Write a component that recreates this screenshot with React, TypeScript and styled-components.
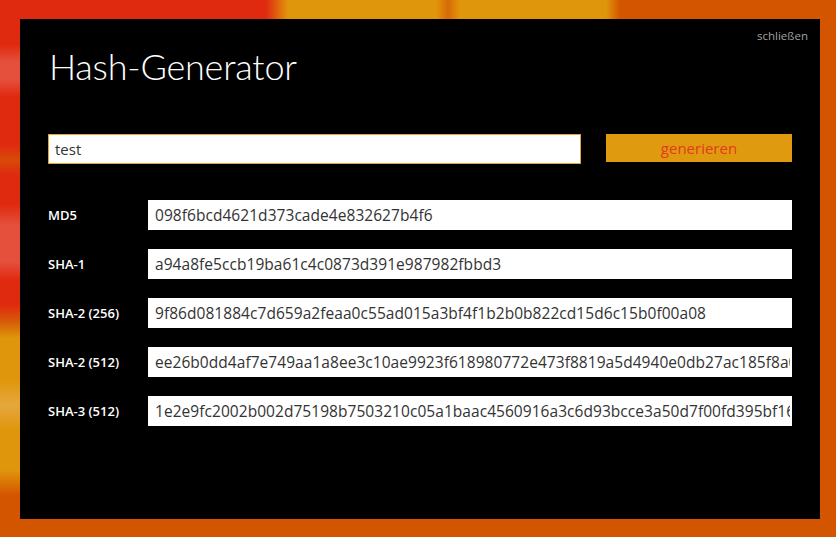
import styled, { createGlobalStyle } from 'styled-components';

const GlobalStyle = createGlobalStyle`
  html, body {
    margin: 0;
    padding: 0;
    height: 100%;
  }
  body {
    font-family: "Open Sans", "Liberation Sans", sans-serif;
    overflow: hidden;
  }
`;

const hashes = [
  { label: 'MD5', value: '098f6bcd4621d373cade4e832627b4f6' },
  { label: 'SHA-1', value: 'a94a8fe5ccb19ba61c4c0873d391e987982fbbd3' },
  { label: 'SHA-2 (256)', value: '9f86d081884c7d659a2feaa0c55ad015a3bf4f1b2b0b822cd15d6c15b0f00a08' },
  {
    label: 'SHA-2 (512)',
    value:
      'ee26b0dd4af7e749aa1a8ee3c10ae9923f618980772e473f8819a5d4940e0db27ac185f8a0e1d5f84f88bc887fd67b143732c304cc5fa9ad8e6f57f50028a8ff',
  },
  {
    label: 'SHA-3 (512)',
    value:
      '1e2e9fc2002b002d75198b7503210c05a1baac4560916a3c6d93bcce3a50d7f00fd395bf1647b9abb8d1afcc9c76c289b0c9383ba386a956da4b38934417789e',
  },
];

export default function App() {
  return (
    <>
      <GlobalStyle />
      <Backdrop>
        <Dialog>
          <CloseRow>
            <CloseButton type="button">schließen</CloseButton>
          </CloseRow>
          <Title>Hash-Generator</Title>

          <InputRow>
            <TextInput defaultValue="test" />
            <GenerateButton type="button">generieren</GenerateButton>
          </InputRow>

          <Results>
            {hashes.map((h) => (
              <ResultRow key={h.label}>
                <Label>{h.label}</Label>
                <Output readOnly value={h.value} />
              </ResultRow>
            ))}
          </Results>
        </Dialog>
      </Backdrop>
    </>
  );
}

const Backdrop = styled.div`
  width: 836px;
  height: 537px;
  box-sizing: border-box;
  padding: 19px 16px 18px 20px;
  background:
    linear-gradient(
        to right,
        #e02a10 0,
        #e02a10 266px,
        #e0960c 288px,
        #e0960c 436px,
        #d86a06 448px,
        #e0960c 460px,
        #e0960c 606px,
        #d45500 620px
      )
      left top / 100% 19px no-repeat,
    linear-gradient(
        to bottom,
        #e02a10 0,
        #e02a10 45px,
        #e4503c 62px,
        #e4503c 80px,
        #e02a10 96px,
        #e02a10 145px,
        #d84a08 160px,
        #e02a10 175px,
        #e02a10 205px,
        #e4503c 225px,
        #e4503c 262px,
        #e02a10 280px,
        #e02a10 305px,
        #d65c08 322px,
        #e0960c 338px,
        #e0960c 380px,
        #e4a83c 405px,
        #e0960c 430px,
        #e0960c 470px,
        #d45500 495px
      )
      left top / 20px 100% no-repeat,
    #d45500;
`;

const Dialog = styled.div`
  width: 800px;
  height: 500px;
  box-sizing: border-box;
  background: #000;
  padding: 0 28px;
  display: flex;
  flex-direction: column;
`;

const CloseRow = styled.div`
  display: flex;
  justify-content: flex-end;
  margin-right: -16px;
  padding-top: 9px;
`;

const CloseButton = styled.button`
  background: none;
  border: none;
  padding: 0;
  color: #a0a0a0;
  font-family: "Open Sans", sans-serif;
  font-size: 11.5px;
  line-height: 16px;
  cursor: pointer;
`;

const Title = styled.h1`
  margin: 0 0 0 1px;
  font-family: Lato, "Open Sans", sans-serif;
  font-weight: 300;
  font-size: 36px;
  line-height: 44px;
  color: #fff;
  letter-spacing: -0.2px;
`;

const InputRow = styled.div`
  display: flex;
  align-items: flex-start;
  gap: 25px;
  margin-top: 46px;
`;

const TextInput = styled.input`
  width: 533px;
  height: 30px;
  box-sizing: border-box;
  border: 1px solid #e3a23a;
  background: #fff;
  padding: 0 6px;
  font-family: "Open Sans", sans-serif;
  font-size: 15px;
  color: #333;
  outline: none;
`;

const GenerateButton = styled.button`
  flex: 1;
  height: 28px;
  border: none;
  background: #e09a10;
  color: #e23a1c;
  font-family: "Open Sans", sans-serif;
  font-size: 15px;
  cursor: pointer;
`;

const Results = styled.div`
  display: flex;
  flex-direction: column;
  gap: 19px;
  margin-top: 36px;
`;

const ResultRow = styled.div`
  display: flex;
  align-items: center;
  height: 30px;
`;

const Label = styled.div`
  width: 100px;
  flex-shrink: 0;
  color: #fff;
  font-family: "Open Sans", sans-serif;
  font-weight: 600;
  font-size: 13px;
`;

const Output = styled.input`
  flex: 1;
  min-width: 0;
  height: 30px;
  box-sizing: border-box;
  border: none;
  background: #fff;
  padding: 0 2px 0 7px;
  font-family: "Open Sans", sans-serif;
  font-size: 15.5px;
  letter-spacing: 0.05px;
  color: #333;
  outline: none;
`;
